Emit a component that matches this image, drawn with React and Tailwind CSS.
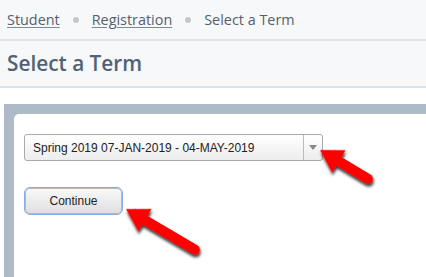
import React from "react";

function Arrow({ x, y, angle, len }) {
  const h = 22;
  const H = 13;
  const w = 5;
  const d = `M0,0 L${h},${-H} L${h},${-w} L${len},${-w} A${w} ${w} 0 0 1 ${len},${w} L${h},${w} L${h},${H} Z`;
  return (
    <path
      d={d}
      fill="#f00"
      filter="url(#shadow)"
      transform={`translate(${x},${y}) rotate(${angle})`}
    />
  );
}

export default function App() {
  return (
    <div className="relative w-[426px] h-[277px] overflow-hidden bg-white font-['Open_Sans',sans-serif]">
      <div className="bg-[#f7f8fa]">
        <div className="h-[41px] flex items-center pl-[7px] text-[14.4px] text-[#55606b] border-b-2 border-[#dde2e6]">
          <span className="underline underline-offset-2 decoration-[#7a8a99]">Student</span>
          <span className="mx-[13px] w-[6px] h-[6px] rounded-full bg-[#c4c7ca]"></span>
          <span className="underline underline-offset-2 decoration-[#7a8a99]">Registration</span>
          <span className="mx-[13px] w-[6px] h-[6px] rounded-full bg-[#c4c7ca]"></span>
          <span>Select a Term</span>
        </div>
        <div className="h-[47px] flex items-center pl-[7px] border-b-2 border-[#dde2e6]">
          <h1 className="text-[20.8px] font-semibold text-[#506274]">Select a Term</h1>
        </div>
      </div>
      <div className="pt-[16px] pl-[4px]">
        <div className="bg-[#adbac7] pt-[10px] pl-[10px] h-[200px]">
          <div className="bg-white rounded-tl-[5px] h-full pt-[20px] pl-[10px] font-['Liberation_Sans',Arial,sans-serif]">
            <div className="w-[299px] h-[27px] flex border border-[#aaaaaa] rounded-[3px] bg-gradient-to-b from-white to-[#ededed]">
              <div className="flex-1 flex items-center pl-[8px] text-[12px] text-[#222]">
                Spring 2019 07-JAN-2019 - 04-MAY-2019
              </div>
              <div className="w-[19px] border-l border-[#bbbbbb] flex items-center justify-center">
                <div className="w-0 h-0 border-l-[4px] border-r-[4px] border-t-[5px] border-l-transparent border-r-transparent border-t-[#888]"></div>
              </div>
            </div>
            <button className="mt-[26px] w-[99px] h-[28px] rounded-[6px] border border-[#86aceb] bg-gradient-to-b from-[#fafafa] to-[#dedede] text-[12px] text-[#222] shadow-[inset_0_0_0_1px_#b9b9b9]">
              Continue
            </button>
          </div>
        </div>
      </div>
      <svg className="absolute inset-0" width="426" height="277">
        <defs>
          <filter id="shadow" x="-20%" y="-20%" width="140%" height="140%">
            <feDropShadow dx="2" dy="2" stdDeviation="1.5" floodColor="#000" floodOpacity="0.8" />
          </filter>
        </defs>
        <Arrow x={320} y={150} angle={31} len={56} />
        <Arrow x={126} y={209} angle={30.5} len={80} />
      </svg>
    </div>
  );
}
